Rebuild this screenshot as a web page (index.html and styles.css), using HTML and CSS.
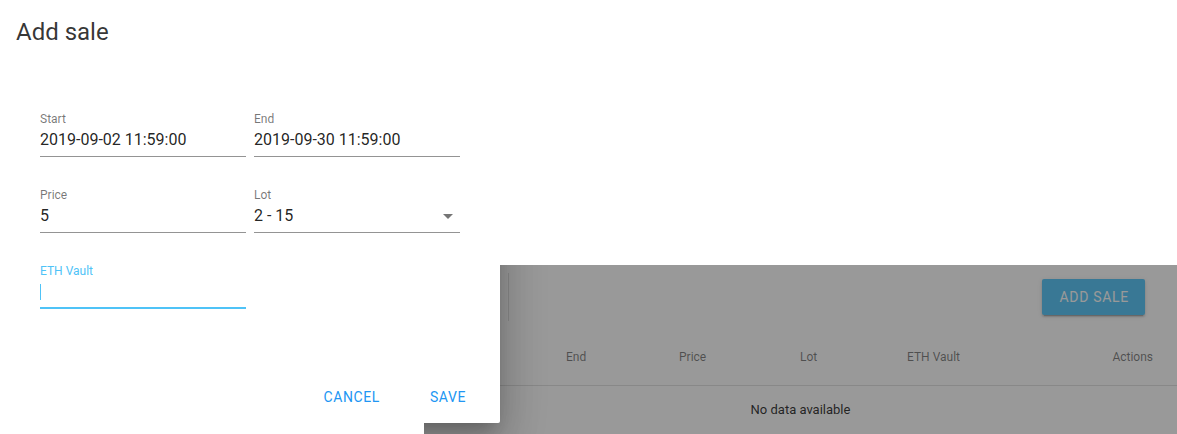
FILE: index.html
```html
<!DOCTYPE html>
<html lang="en">

<head>
    <meta charset="UTF-8">
    <meta name="viewport" content="width=device-width, initial-scale=1.0">
    <title>Sales - Add sale</title>
    <link rel="stylesheet" href="styles.css">
</head>

<body>

    <div class="page">
        <section class="sales-card">
            <div class="toolbar">
                <span class="toolbar-title">Sales</span>
                <span class="toolbar-divider"></span>
                <span class="spacer"></span>
                <button class="btn-add">Add sale</button>
            </div>
            <div class="table-head">
                <span>Start</span>
                <span>End</span>
                <span>Price</span>
                <span>Lot</span>
                <span>ETH Vault</span>
                <span class="align-right">Actions</span>
            </div>
            <div class="table-empty">No data available</div>
            <div class="scrim"></div>
        </section>

        <div class="dialog">
            <h2 class="dialog-title">Add sale</h2>
            <form class="dialog-form">
                <div class="field">
                    <div class="field-label">Start</div>
                    <div class="field-value">2019-09-02 11:59:00</div>
                </div>
                <div class="field">
                    <div class="field-label">End</div>
                    <div class="field-value">2019-09-30 11:59:00</div>
                </div>
                <div class="field">
                    <div class="field-label">Price</div>
                    <div class="field-value">5</div>
                </div>
                <div class="field">
                    <div class="field-label">Lot</div>
                    <div class="field-value select">
                        <span>2 - 15</span>
                        <svg class="arrow" width="24" height="24" viewBox="0 0 24 24">
                            <path d="M7 10l5 5 5-5z" fill="currentColor" />
                        </svg>
                    </div>
                </div>
                <div class="field is-focused">
                    <div class="field-label">ETH Vault</div>
                    <div class="field-value"><span class="caret"></span></div>
                </div>
            </form>
            <div class="dialog-actions">
                <button type="button" class="btn-flat">Cancel</button>
                <button type="button" class="btn-flat">Save</button>
            </div>
        </div>
    </div>

</body>

</html>
```

FILE: styles.css
```css
html,
body {
    height: 100%;
    overflow: hidden;
}

body {
    font-family: 'Roboto', 'Liberation Sans', sans-serif;
    background-color: #ffffff;
    color: rgba(0, 0, 0, 0.87);
    margin: 0;
}

.page {
    position: relative;
    height: 100%;
    box-sizing: border-box;
    padding-top: 265px;
}

/* table card behind the dialog */
.sales-card {
    position: relative;
    overflow: hidden;
    margin-left: 424px;
    height: 169px;
    background-color: #fff;
}

.toolbar {
    display: flex;
    align-items: center;
    height: 64px;
    padding: 0 24px;
}

.toolbar-title {
    width: 44px;
    font-size: 20px;
}

.toolbar-divider {
    align-self: stretch;
    margin: 8px 0 8px 16px;
    border-left: 1px solid rgba(0, 0, 0, 0.12);
}

.spacer {
    flex: 1;
}

.btn-add {
    height: 36px;
    min-width: 88px;
    margin: 0 8px;
    padding: 0 16px 0 17px;
    background-color: #4fc3f7;
    color: #fff;
    border: none;
    border-radius: 2px;
    font-family: inherit;
    font-size: 14px;
    font-weight: 400;
    letter-spacing: 0.7px;
    text-transform: uppercase;
    box-shadow: 0 3px 1px -2px rgba(0, 0, 0, 0.2), 0 2px 2px 0 rgba(0, 0, 0, 0.14), 0 1px 5px 0 rgba(0, 0, 0, 0.12);
}

.table-head {
    display: grid;
    grid-template-columns: 118px 113px 121px 107px 1fr 90px;
    align-items: center;
    height: 56px;
    border-bottom: 1px solid rgba(0, 0, 0, 0.12);
    font-size: 12px;
    font-weight: 400;
    color: rgba(0, 0, 0, 0.54);
}

.table-head span {
    padding-left: 24px;
}

.table-head .align-right {
    padding: 0 24px 0 0;
    text-align: right;
}

.table-empty {
    height: 48px;
    line-height: 48px;
    text-align: center;
    font-size: 13px;
}

.scrim {
    position: absolute;
    inset: 0;
    background-color: rgba(33, 33, 33, 0.46);
}

/* dialog shadow, only seen on the dimmed card */
.sales-card::after {
    content: '';
    position: absolute;
    left: -424px;
    top: -265px;
    width: 500px;
    height: 423px;
    border-radius: 2px;
    box-shadow: 0 11px 15px -7px rgba(0, 0, 0, 0.2), 0 24px 38px 3px rgba(0, 0, 0, 0.14), 0 9px 46px 8px rgba(0, 0, 0, 0.12);
}

/* dialog */
.dialog {
    position: absolute;
    top: 0;
    left: 0;
    width: 500px;
    height: 423px;
    display: flex;
    flex-direction: column;
    background-color: #fff;
    border-radius: 0 0 2px 0;
}

.dialog-title {
    margin: 0;
    padding: 16px 16px 0;
    font-size: 24px;
    font-weight: 400;
    line-height: 32px;
    color: rgba(0, 0, 0, 0.8);
}

.dialog-form {
    display: grid;
    grid-template-columns: 206px 206px;
    column-gap: 8px;
    row-gap: 30px;
    padding: 63px 40px 0;
}

.field {
    padding-bottom: 6px;
    border-bottom: 1px solid rgba(0, 0, 0, 0.42);
}

.field-label {
    font-size: 12px;
    line-height: 16px;
    color: rgba(0, 0, 0, 0.54);
}

.field-value {
    display: flex;
    align-items: center;
    height: 20px;
    margin-top: 3px;
    font-size: 16px;
    line-height: 20px;
    color: rgba(0, 0, 0, 0.87);
}

.field-value.select {
    justify-content: space-between;
}

.arrow {
    flex: none;
    margin-right: 0;
    color: rgba(0, 0, 0, 0.54);
}

.field.is-focused {
    padding-bottom: 5px;
    border-bottom: 2px solid #4fc3f7;
}

.field.is-focused .field-label {
    color: #4fc3f7;
}

.caret {
    width: 1px;
    height: 16px;
    background-color: #4fc3f7;
}

.dialog-actions {
    display: flex;
    justify-content: flex-end;
    gap: 8px;
    margin-top: auto;
    padding: 8px;
}

.btn-flat {
    height: 36px;
    min-width: 88px;
    padding: 0 16px;
    background: none;
    border: none;
    color: #2196f3;
    font-family: inherit;
    font-size: 14px;
    font-weight: 400;
    letter-spacing: 0.6px;
    text-transform: uppercase;
    cursor: pointer;
}
```
